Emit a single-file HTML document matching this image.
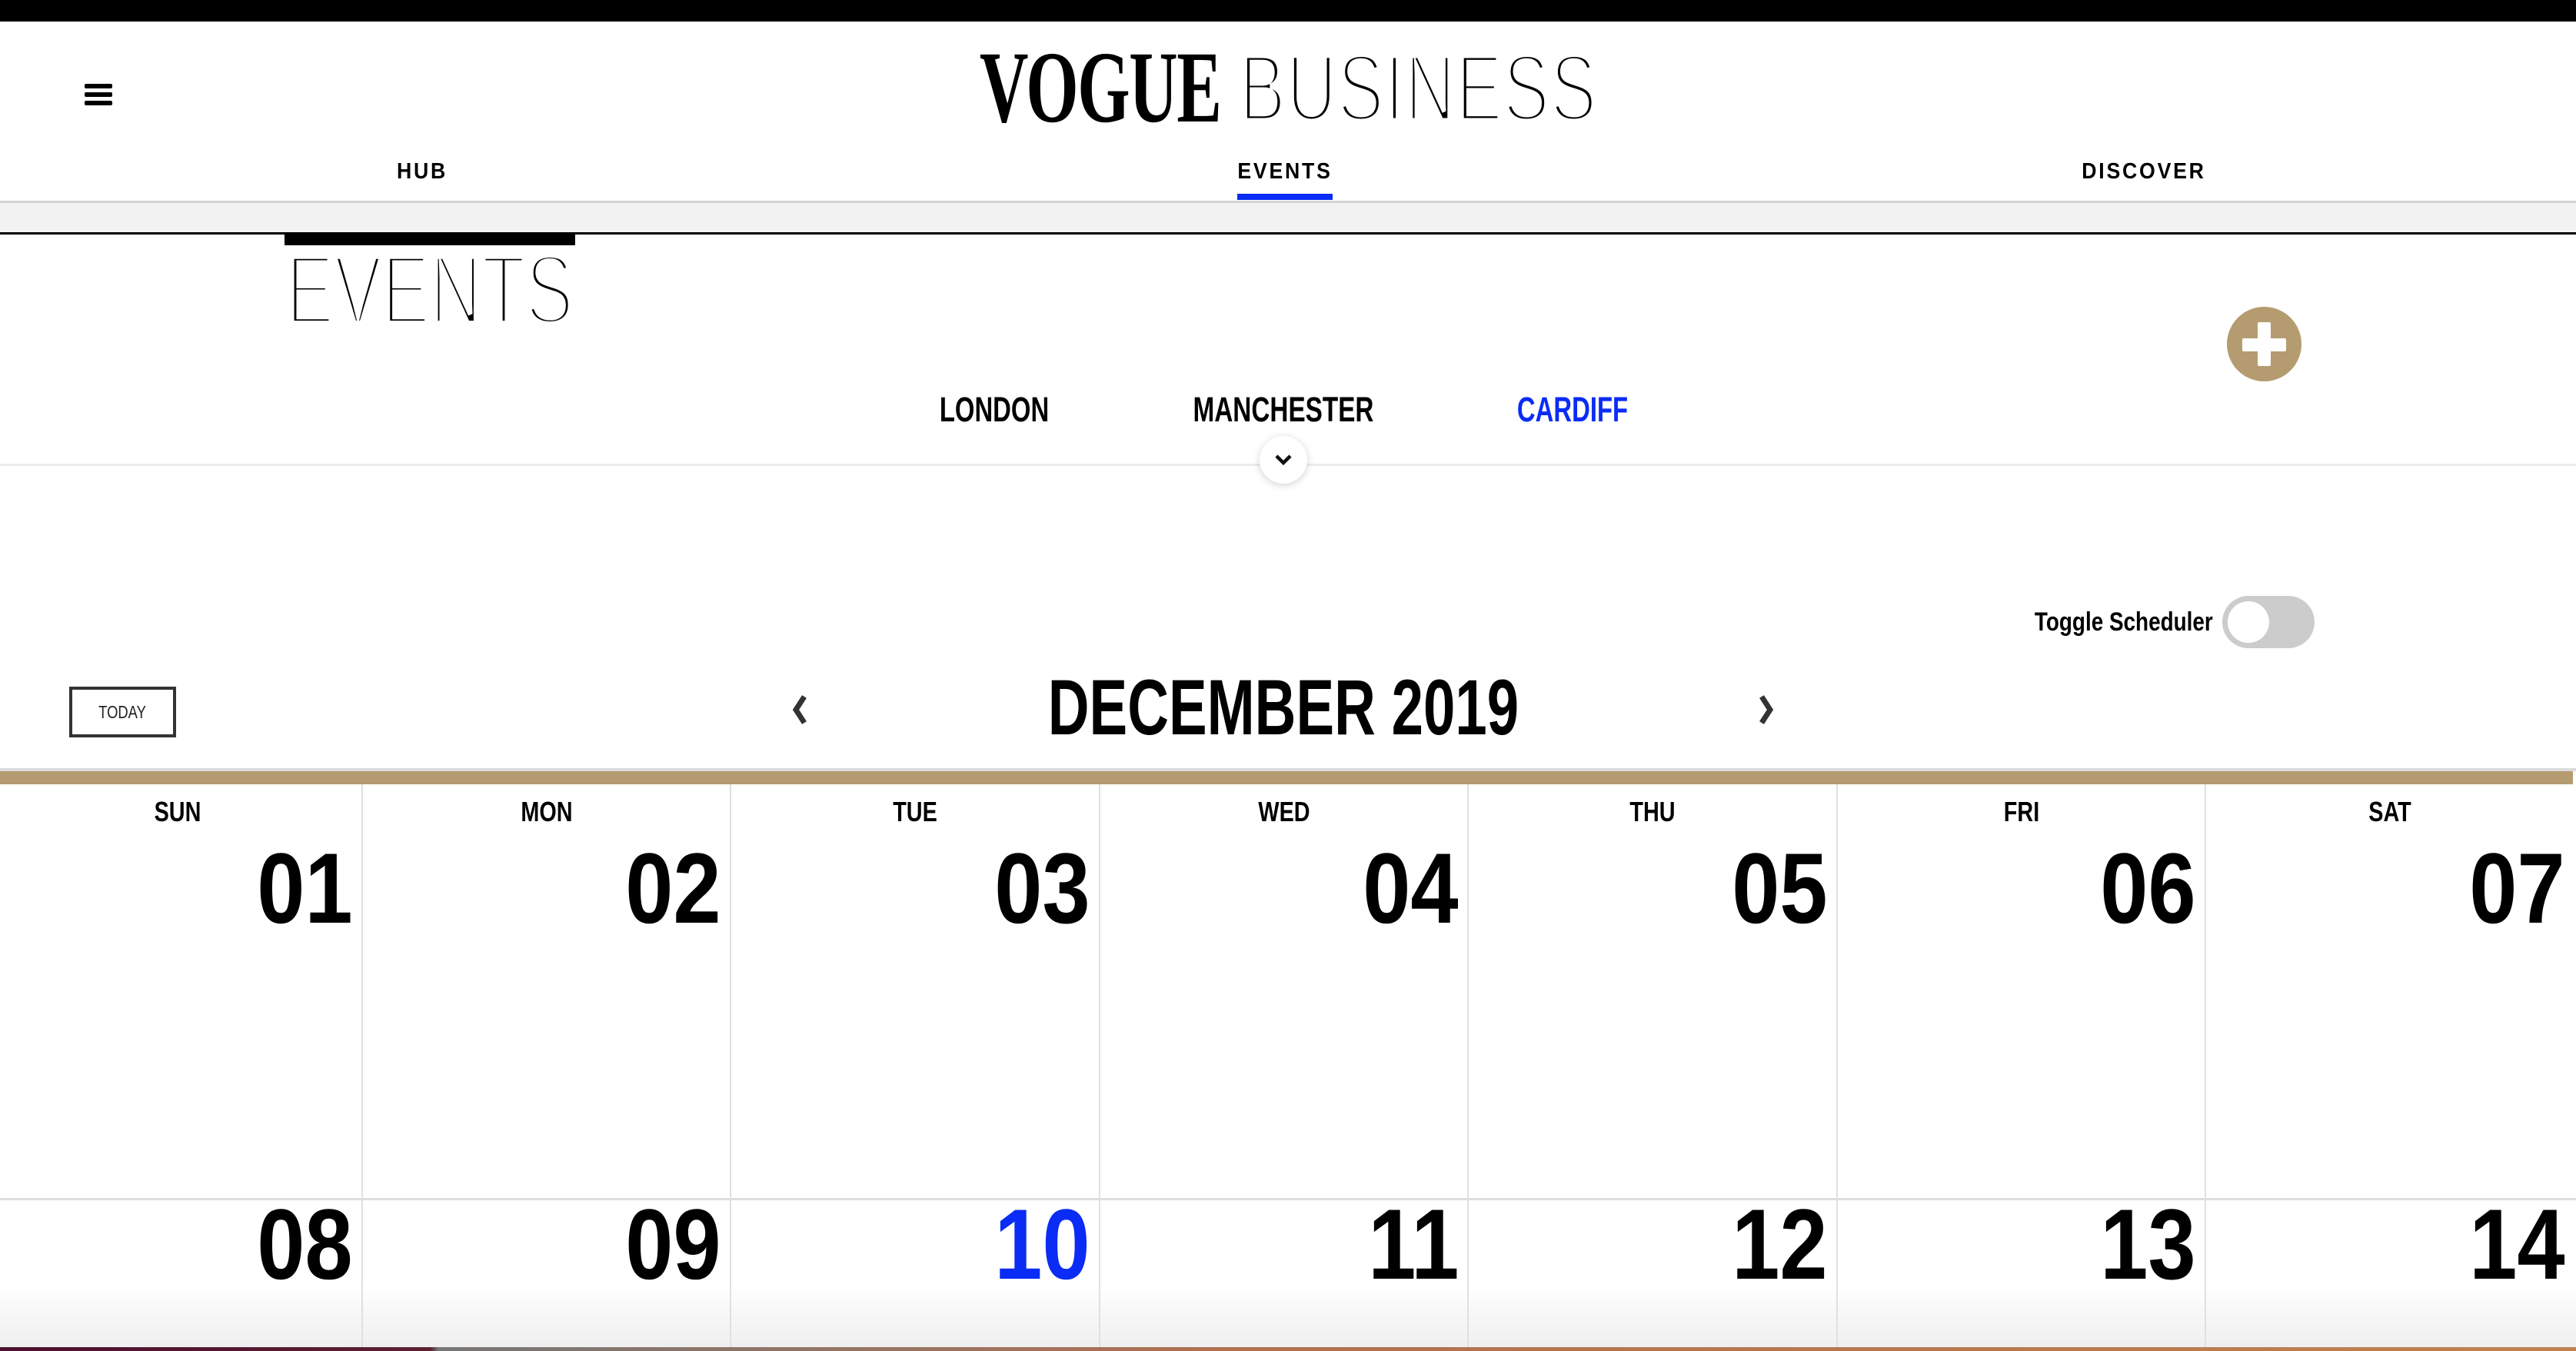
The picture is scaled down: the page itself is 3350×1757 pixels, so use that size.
<!DOCTYPE html>
<html><head><meta charset="utf-8"><style>
*{margin:0;padding:0;box-sizing:border-box}
html,body{width:3350px;height:1757px;overflow:hidden;background:#fff;font-family:"Liberation Sans",sans-serif;color:#000}
.a{position:absolute;white-space:nowrap;line-height:1}
.b{font-weight:bold}
</style></head><body>
<div class="a" style="left:0;top:0;width:3350px;height:28px;background:#000"></div>
<div class="a" style="left:110px;top:109px;width:36px;height:6px;background:#000;border-radius:2px"></div>
<div class="a" style="left:110px;top:120px;width:36px;height:6px;background:#000;border-radius:2px"></div>
<div class="a" style="left:110px;top:131px;width:36px;height:6px;background:#000;border-radius:2px"></div>
<div class="a" style="left:1274px;top:47px;font-family:'Liberation Serif',serif;font-weight:bold;font-size:133px;transform:scaleX(0.66);transform-origin:left top;letter-spacing:-2px">VOGUE</div>
<div class="a" style="left:1612px;top:54px;font-size:123px;transform:scaleX(0.73);transform-origin:left top;-webkit-text-stroke:7px #fff;letter-spacing:2px">BUSINESS</div>
<div class="a b" style="left:549px;top:209px;font-size:29px;letter-spacing:3px;transform:translateX(-50%) scaleX(0.92)">HUB</div>
<div class="a b" style="left:1671px;top:209px;font-size:29px;letter-spacing:3px;transform:translateX(-50%) scaleX(0.92)">EVENTS</div>
<div class="a b" style="left:2788px;top:209px;font-size:29px;letter-spacing:3px;transform:translateX(-50%) scaleX(0.92)">DISCOVER</div>
<div class="a" style="left:1609px;top:252px;width:124px;height:8px;background:#0a2cf5"></div>
<div class="a" style="left:0;top:261px;width:3350px;height:3px;background:#d4d4d4"></div>
<div class="a" style="left:0;top:264px;width:3350px;height:38px;background:#f2f2f2"></div>
<div class="a" style="left:0;top:302px;width:3350px;height:3px;background:#000"></div>
<div class="a" style="left:370px;top:303px;width:378px;height:16px;background:#000"></div>
<div class="a" style="left:372px;top:314px;font-size:128px;transform:scaleX(0.73);transform-origin:left top;-webkit-text-stroke:8px #fff">EVENTS</div>
<div class="a" style="left:2896px;top:399px;width:97px;height:97px;border-radius:50%;background:#b59b70"></div>
<div class="a" style="left:2916px;top:440px;width:57px;height:17px;background:#fff;border-radius:2px"></div>
<div class="a" style="left:2936px;top:419px;width:17px;height:57px;background:#fff;border-radius:2px"></div>
<div class="a b" style="left:1293px;top:510px;font-size:45px;transform:translateX(-50%) scaleX(0.73)">LONDON</div>
<div class="a b" style="left:1669px;top:510px;font-size:45px;transform:translateX(-50%) scaleX(0.74)">MANCHESTER</div>
<div class="a b" style="left:2045px;top:510px;font-size:45px;transform:translateX(-50%) scaleX(0.73);color:#0a2cf5">CARDIFF</div>
<div class="a" style="left:0;top:603px;width:3350px;height:3px;background:#ececec"></div>
<div class="a" style="left:1638px;top:567px;width:62px;height:62px;border-radius:50%;background:#fff;box-shadow:0 2px 10px rgba(0,0,0,0.18)"></div>
<svg class="a" style="left:1655px;top:588px" width="28" height="20" viewBox="0 0 28 20"><path d="M5 5 L14 14 L23 5" fill="none" stroke="#111" stroke-width="4.5"/></svg>
<div class="a b" style="right:472px;top:792px;font-size:34px;transform:scaleX(0.82);transform-origin:right top">Toggle Scheduler</div>
<div class="a" style="left:2890px;top:775px;width:120px;height:68px;border-radius:34px;background:#cccccc"></div>
<div class="a" style="left:2897px;top:782px;width:54px;height:54px;border-radius:50%;background:#fff"></div>
<div class="a" style="left:90px;top:893px;width:139px;height:66px;border:4px solid #333"></div>
<div class="a" style="left:159px;top:915px;font-size:23px;transform:translateX(-50%) scaleX(0.8);color:#222">TODAY</div>
<svg class="a" style="left:1024px;top:898px" width="32" height="50" viewBox="0 0 32 50"><path d="M22 8 L11 25 L22 42" fill="none" stroke="#333" stroke-width="7"/></svg>
<div class="a b" style="left:1669px;top:869px;font-size:102px;transform:translateX(-50%) scaleX(0.73)">DECEMBER 2019</div>
<svg class="a" style="left:2281px;top:898px" width="32" height="50" viewBox="0 0 32 50"><path d="M10 8 L21 25 L10 42" fill="none" stroke="#333" stroke-width="7"/></svg>
<div class="a" style="left:0;top:999px;width:3350px;height:4px;background:#dcdcdc"></div>
<div class="a" style="left:0;top:1003px;width:3346px;height:17px;background:#b59b70"></div>
<div class="a" style="left:0;top:1558px;width:3350px;height:3px;background:#dddddd"></div>
<div class="a" style="left:0;top:1670px;width:3350px;height:82px;background:linear-gradient(#fff,#efefef)"></div>
<div class="a" style="left:0;top:1752px;width:3350px;height:5px;background:linear-gradient(90deg,#4a1030 0,#5a2030 560px,#777 570px,#b07050 1600px,#c08050 3350px)"></div>
<div id="cal"></div>
<script>
var days=["SUN","MON","TUE","WED","THU","FRI","SAT"],h="";
for(var i=0;i<7;i++){
 var L=-9+i*479.5,R=L+479.5;
 if(i<6)h+='<div class="a" style="left:'+(R-1)+'px;top:1020px;width:2px;height:732px;background:#e0e0e0"></div>';
 h+='<div class="a b" style="left:'+(L+240)+'px;top:1038px;font-size:36px;transform:translateX(-50%) scaleX(0.8)">'+days[i]+'</div>';
 var d1=("0"+(i+1)).slice(-2),d2=("0"+(i+8)).slice(-2);
 h+='<div class="a b" style="right:'+(3350-R+12)+'px;top:1090px;font-size:130px;transform:scaleX(0.86);transform-origin:right top">'+d1+'</div>';
 h+='<div class="a b" style="right:'+(3350-R+12)+'px;top:1553px;font-size:130px;transform:scaleX(0.86);transform-origin:right top;'+(i==2?'color:#0a2cf5':'')+'">'+d2+'</div>';
}
document.getElementById("cal").innerHTML=h;
</script>
</body></html>
